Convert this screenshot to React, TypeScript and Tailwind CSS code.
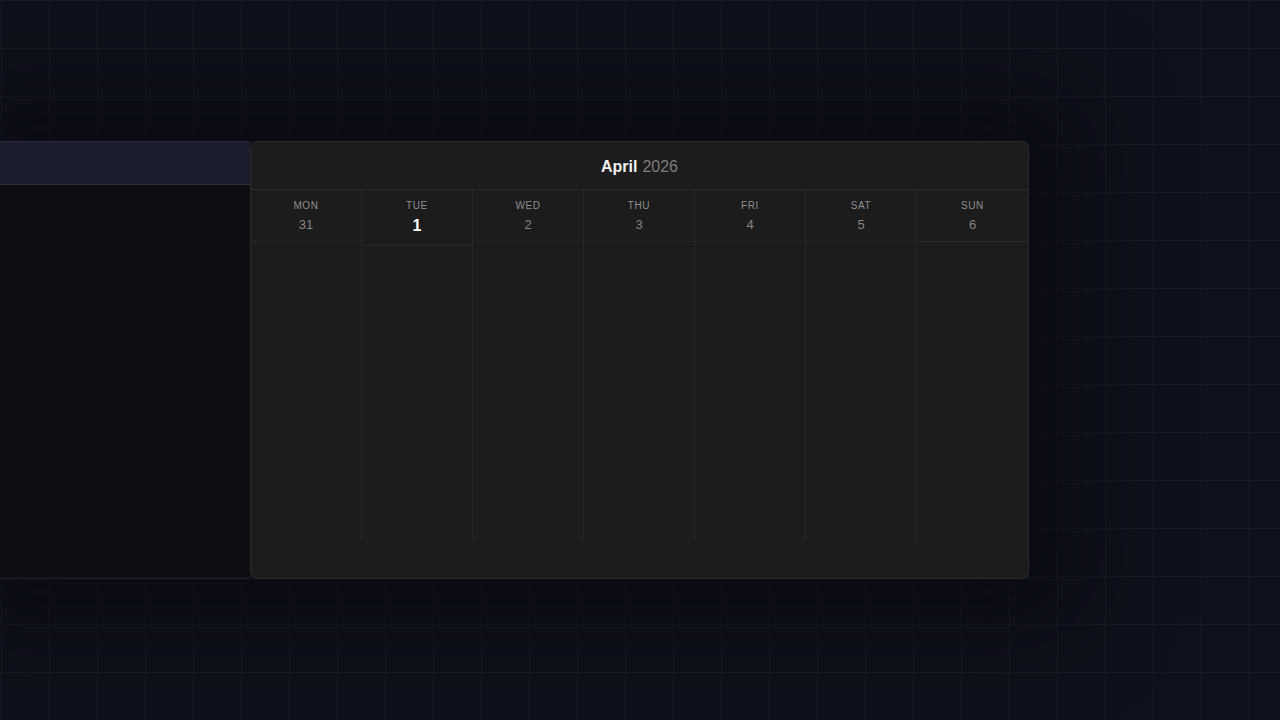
import React from "react";

interface IDay {
  name: string;
  num: number;
  today?: boolean;
}

const days: IDay[] = [
  { name: "MON", num: 31 },
  { name: "TUE", num: 1, today: true },
  { name: "WED", num: 2 },
  { name: "THU", num: 3 },
  { name: "FRI", num: 4 },
  { name: "SAT", num: 5 },
  { name: "SUN", num: 6 },
];

export default function App() {
  return (
    <main
      className="h-[720px] w-[1280px] overflow-hidden bg-[#0f111c] bg-[linear-gradient(rgba(255,255,255,0.035)_1px,transparent_1px),linear-gradient(90deg,rgba(255,255,255,0.035)_1px,transparent_1px)] bg-[size:48px_48px] bg-[position:1px_0px] pt-[141px]"
      style={{ fontFamily: '"Liberation Sans", Arial, sans-serif' }}>
      <div className="flex h-[438px] w-[1029px] shadow-[0_0_90px_40px_rgba(5,5,10,0.55)]">
        {/* left panel behind the calendar */}
        <div className="flex w-[250px] flex-col">
          <div className="h-[44px] border-y border-[#2a2b3c] bg-[#1b1c2c]" />
          <div className="flex-1 border-b border-[#232330] bg-[#0d0d12]" />
        </div>

        {/* calendar card */}
        <div className="flex w-[779px] flex-col overflow-hidden rounded-lg border border-[#2a2a2a] bg-[#1c1c1c]">
          <div className="flex h-[48px] shrink-0 items-center justify-center gap-[5px] border-b border-[#2b2b2b] pt-[2px] text-[16px]">
            <span className="font-bold text-[#f2f2f2]">April</span>
            <span className="text-[#7d7d7d]">2026</span>
          </div>
          <div className="grid flex-1 grid-cols-7">
            {days.map((d, i) => {
              const divider = i < 6 ? "border-r border-[#272727]" : "";
              return (
                <div key={d.name} className="flex flex-col">
                  <div
                    className={`flex flex-col items-center border-b border-[#2a2a2a] pt-[10px] ${divider} ${
                      d.today ? "h-[56px]" : "h-[52px]"
                    }`}>
                    <span className="text-[10px] leading-[12px] tracking-[0.06em] text-[#8f8f8f]">
                      {d.name}
                    </span>
                    {d.today ? (
                      <span className="mt-[4px] text-[16px] font-bold leading-[20px] text-white">
                        {d.num}
                      </span>
                    ) : (
                      <span className="mt-[5px] text-[13px] leading-[16px] text-[#858585]">
                        {d.num}
                      </span>
                    )}
                  </div>
                  <div className={`flex-1 ${divider}`} />
                  <div className="h-[38px] shrink-0" />
                </div>
              );
            })}
          </div>
        </div>
      </div>
    </main>
  );
}
